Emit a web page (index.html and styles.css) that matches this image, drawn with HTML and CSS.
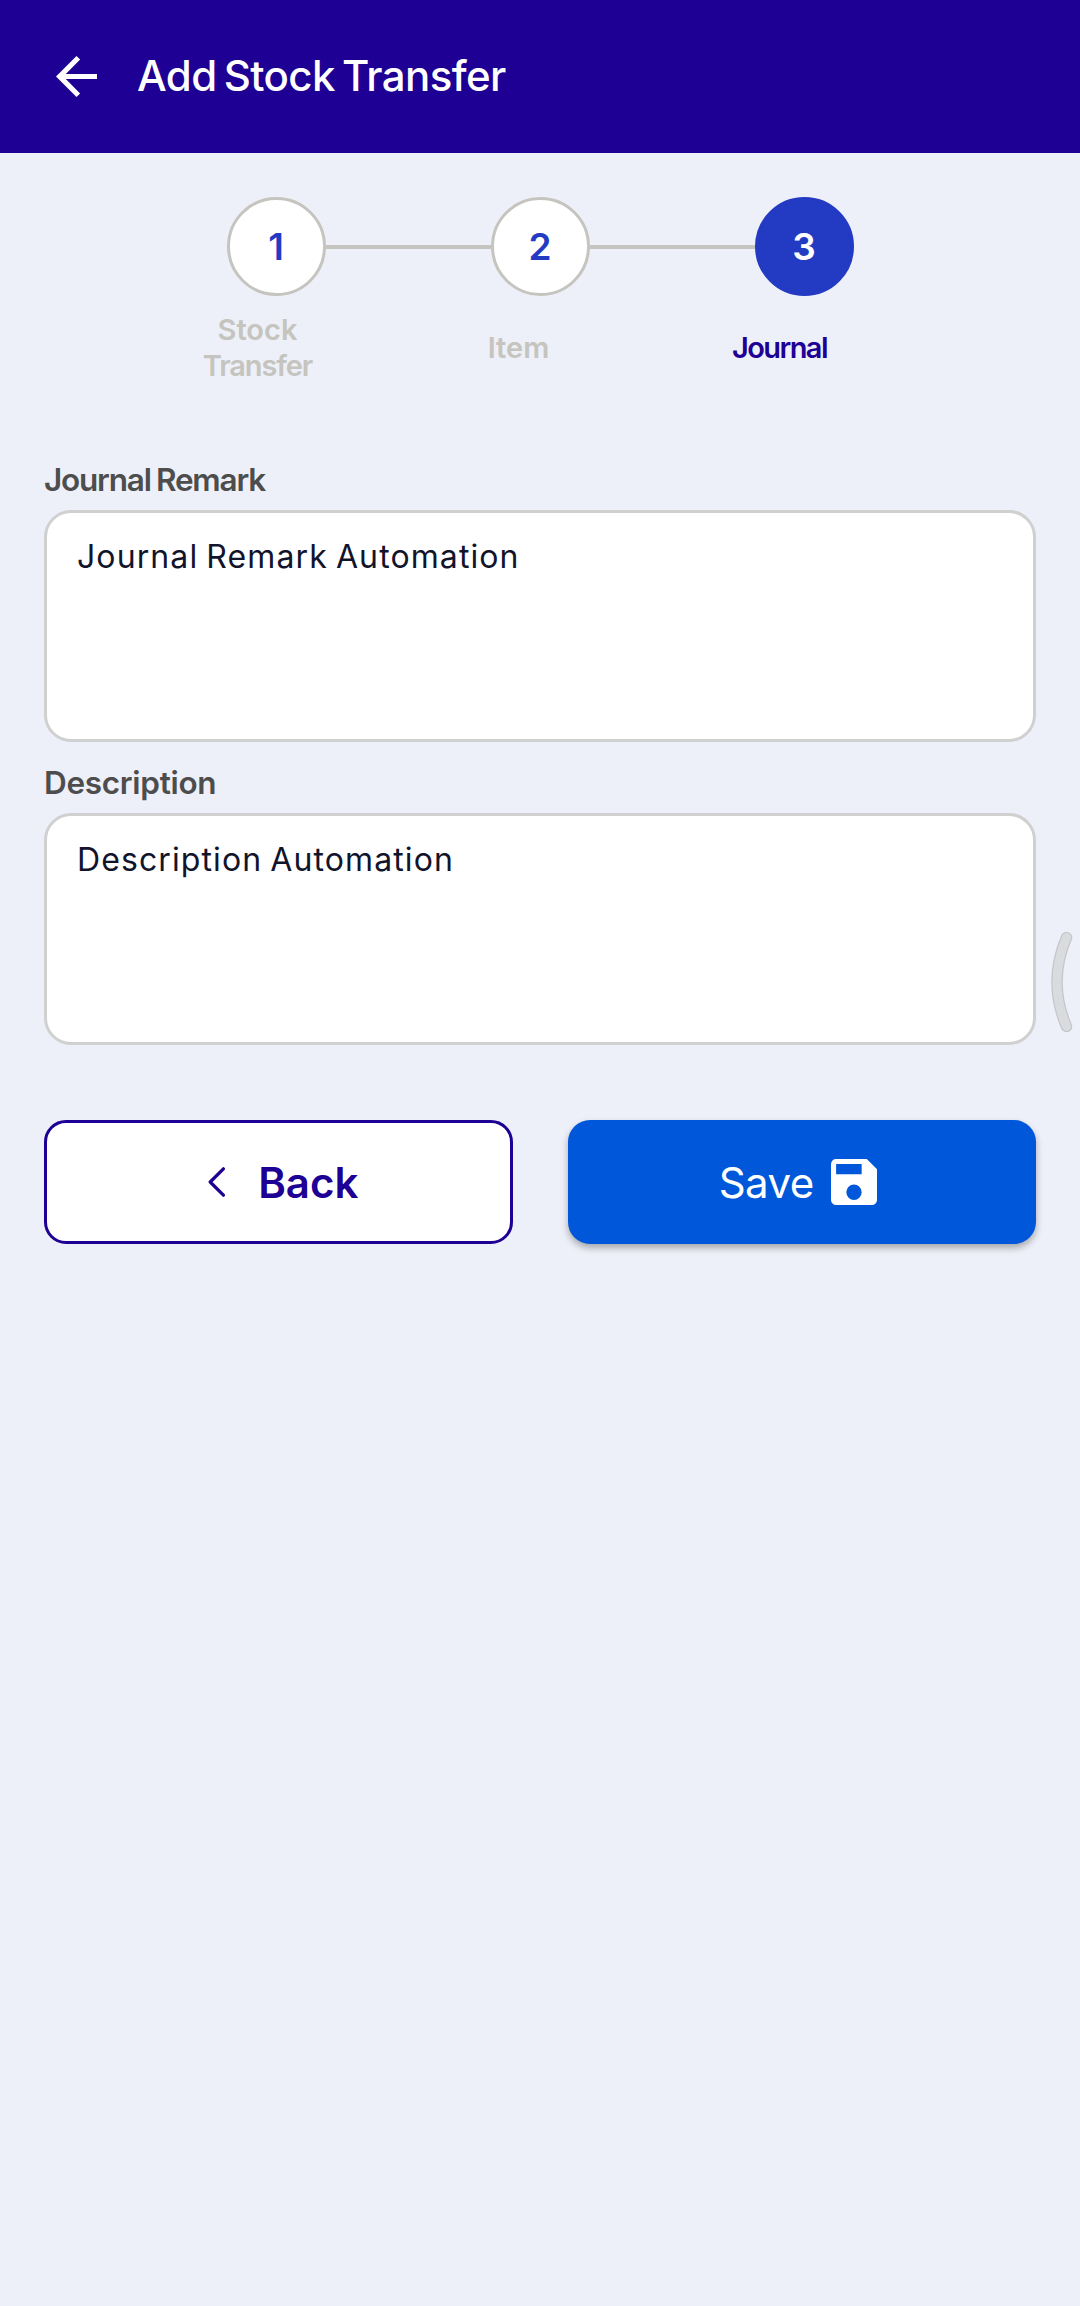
FILE: index.html
```
<!DOCTYPE html>
<html lang="en">
<head>
<meta charset="utf-8">
<title>Add Stock Transfer</title>
<link rel="stylesheet" href="styles.css">
</head>
<body>
<header class="app-bar">
  <svg class="arrow" viewBox="4 4 16 16" fill="#fff"><path d="M20 11H7.83l5.59-5.59L12 4l-8 8 8 8 1.41-1.41L7.83 13H20v-2z"/></svg>
  <h1 class="title">Add Stock Transfer</h1>
</header>
<main class="content">
  <div class="steps">
    <span class="circle">1</span>
    <span class="line"></span>
    <span class="circle">2</span>
    <span class="line"></span>
    <span class="circle active">3</span>
  </div>
  <div class="step-labels">
    <span class="step-label"><span>Stock</span><span class="tight">Transfer</span></span>
    <span class="step-label">Item</span>
    <span class="step-label current">Journal</span>
  </div>
  <section class="field">
    <h2 class="label label-remark">Journal Remark</h2>
    <div class="box">Journal Remark Automation</div>
  </section>
  <section class="field">
    <h2 class="label">Description</h2>
    <div class="box">Description Automation</div>
  </section>
  <div class="actions">
    <button class="btn back"><svg class="chevron" viewBox="0 0 17 30"><path d="M15.4 1.8 2.2 15l13.2 13.2" fill="none" stroke="#1e0094" stroke-width="3.2" stroke-linecap="round" stroke-linejoin="round"/></svg><span>Back</span></button>
    <button class="btn save"><span>Save</span><svg class="disk" viewBox="3 3 18 18" fill="#fff"><path d="M17 3H5a2 2 0 0 0-2 2v14a2 2 0 0 0 2 2h14a2 2 0 0 0 2-2V7l-4-4zm-5 16a3 3 0 1 1 0-6 3 3 0 0 1 0 6zm3-10H5V5h10v4z"/></svg></button>
  </div>
</main>
<svg class="handle" viewBox="0 0 22 100"><path d="M15.5 5.5Q-3.5 50 15.5 94.5" fill="none" stroke="#c4c6ca" stroke-width="11.5" stroke-linecap="round"/><path d="M15.5 5.5Q-3.5 50 15.5 94.5" fill="none" stroke="#d9dbdf" stroke-width="9" stroke-linecap="round"/></svg>
</body>
</html>
```
FILE: styles.css
```
* { box-sizing: border-box; }
body { margin: 0; min-height: 2306px; background: #edf0f8; font-family: Inter, "Open Sans", sans-serif; }
h1, h2 { margin: 0; }
.app-bar { height: 153px; background: #1e0094; display: flex; align-items: center; padding: 0 56px; gap: 40px; color: #fff; }
.arrow { width: 41px; height: 41px; }
.title { font-size: 42px; font-weight: 500; line-height: 50px; padding-bottom: 2px; letter-spacing: -0.6px; word-spacing: -3.5px; }
.content { padding: 44px 44px 0; }
.steps { display: flex; justify-content: center; align-items: center; height: 99px; }
.circle { width: 99px; height: 99px; flex: none; border: 3px solid #c5c4be; border-radius: 50%; background: #fff; color: #233ac3; font-size: 37px; font-weight: 600; display: flex; align-items: center; justify-content: center; }
.circle.active { background: #233ac3; border-color: #233ac3; color: #fff; }
.line { width: 165px; height: 4px; background: #c5c4be; }
.step-labels { display: grid; grid-template-columns: repeat(3, 261px); align-items: center; height: 72px; margin: 16px 0 70px 83px; }
.step-label { display: flex; flex-direction: column; align-items: center; font-size: 29px; font-weight: 600; line-height: 36px; color: #c5c4be; }
.tight { letter-spacing: -1.1px; }
.step-label.current { color: #1e0094; letter-spacing: -1.6px; }
.field { height: 303px; }
.label { height: 56px; font-size: 31.5px; font-weight: 600; line-height: 52px; color: #4d4d4d; letter-spacing: -0.3px; }
.label-remark { letter-spacing: -1.2px; word-spacing: -1.5px; }
.box { height: 232px; border: 3px solid #d0d0d0; border-radius: 27px; background: #fff; padding: 20px 30px; font-size: 32px; line-height: 48px; letter-spacing: 1.1px; word-spacing: -2px; color: #11142b; }
.actions { display: grid; grid-template-columns: 1fr 1fr; gap: 55px; margin-top: 60px; }
.btn { height: 124px; border-radius: 22px; font: 600 42px Inter, sans-serif; display: flex; align-items: center; justify-content: center; }
.back { background: #fff; border: 3px solid #1e0094; color: #1e0094; gap: 33px; padding: 0 0 0 10px; }
.save { background: #0057d9; border: 0; color: #fff; font-weight: 400; letter-spacing: -0.5px; gap: 17px; padding: 0 8px 0 0; box-shadow: 0 4px 7px rgba(0,0,0,.3); }
.chevron { width: 17px; height: 30px; }
.disk { width: 46px; height: 46px; }
.handle { position: absolute; left: 1051px; top: 932px; width: 22px; height: 100px; }
```
